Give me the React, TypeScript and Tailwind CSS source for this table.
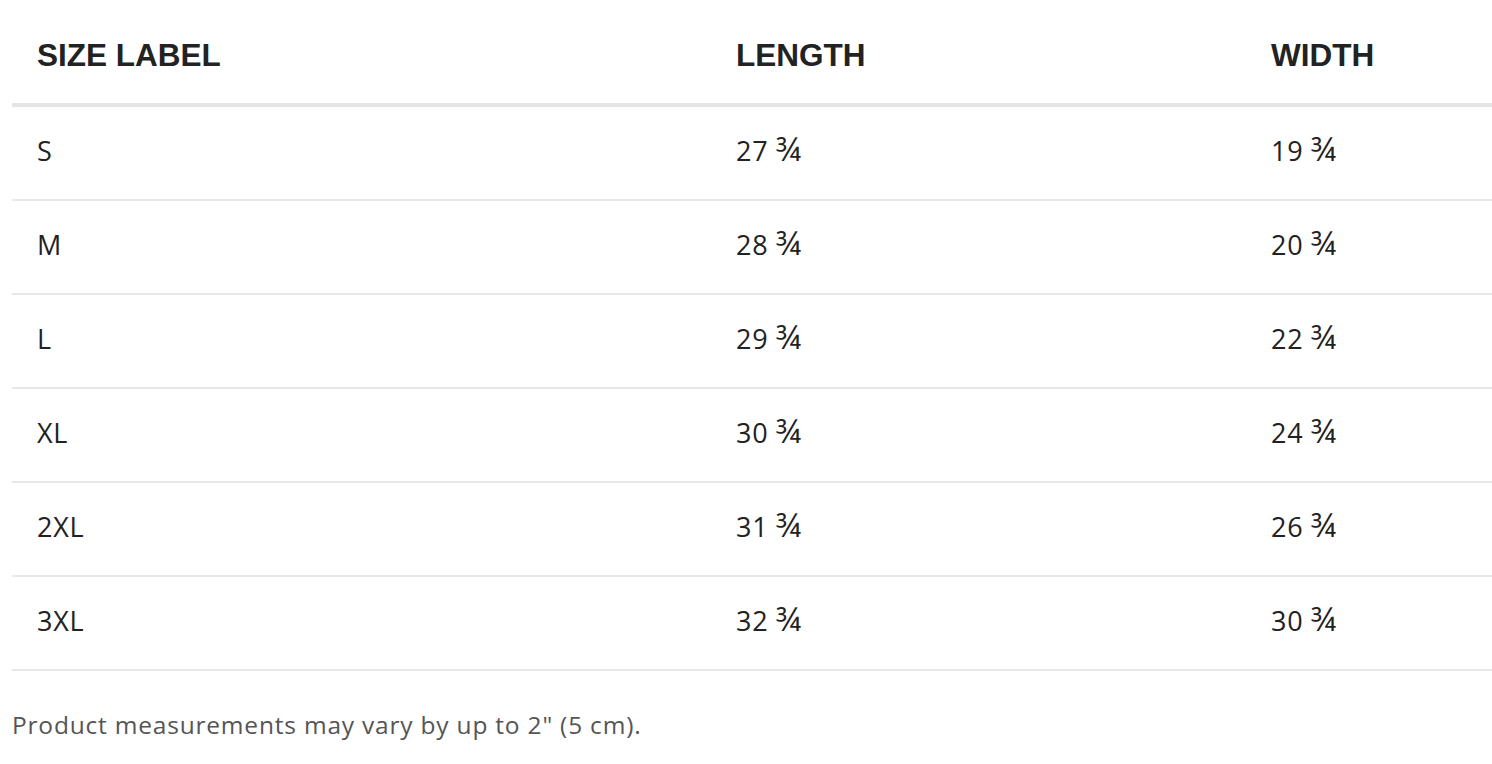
const rows = [
  ['S', '27', '19'],
  ['M', '28', '20'],
  ['L', '29', '22'],
  ['XL', '30', '24'],
  ['2XL', '31', '26'],
  ['3XL', '32', '30'],
]

function Measure({ n }: { n: string }) {
  return (
    <span>
      {n} <span className="text-[32px] leading-none tracking-[1px]">¾</span>
    </span>
  )
}

export default function App() {
  return (
    <div className="min-h-screen bg-white pl-[12px] text-[#222]">
      <div className="grid h-[107px] grid-cols-[699px_535px_1fr] items-center border-b-4 border-[#e5e5e5] pt-[8px] font-['Liberation_Sans',Arial,sans-serif] text-[31.5px] font-bold">
        <div className="px-[25px]">SIZE LABEL</div>
        <div className="px-[25px]">LENGTH</div>
        <div className="px-[25px]">WIDTH</div>
      </div>
      {rows.map((r) => (
        <div
          key={r[0]}
          className="grid h-[94px] grid-cols-[699px_535px_1fr] items-center border-b-2 border-[#e8e8e8] font-['Open_Sans',sans-serif] text-[27px] tracking-[0.7px]"
        >
          <div className="px-[25px] pb-[4px]">{r[0]}</div>
          <div className="px-[25px] pb-[4px]">
            <Measure n={r[1]} />
          </div>
          <div className="px-[25px] pb-[4px]">
            <Measure n={r[2]} />
          </div>
        </div>
      ))}
      <p className="pt-[36px] font-['Open_Sans',sans-serif] text-[24.5px] tracking-[0.8px] text-[#555]">
        Product measurements may vary by up to 2" (5 cm).
      </p>
    </div>
  )
}
